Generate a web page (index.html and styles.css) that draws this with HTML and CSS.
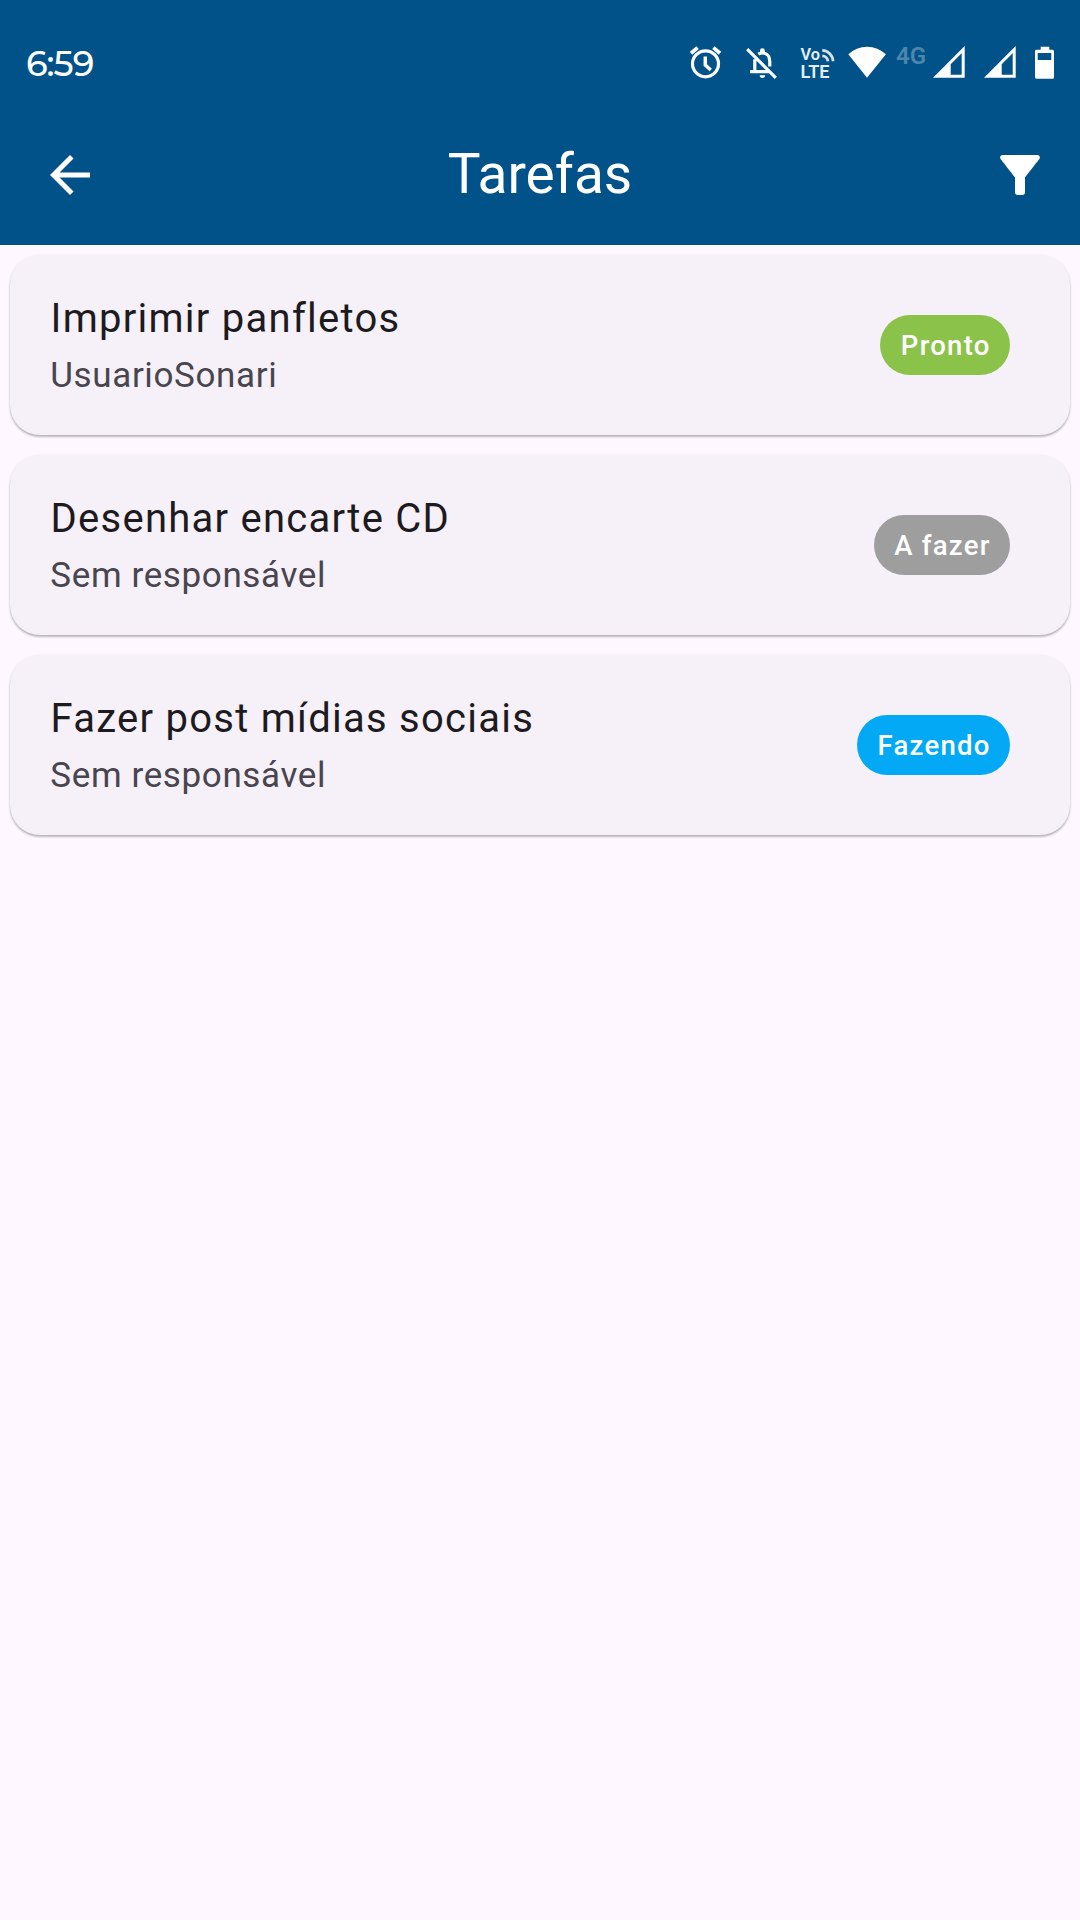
FILE: index.html
```html
<!DOCTYPE html>
<html lang="pt-BR">
<head>
<meta charset="utf-8">
<title>Tarefas</title>
<link rel="stylesheet" href="styles.css">
</head>
<body>
<header class="header">
  <div class="status">
    <span class="clock">6:59</span>
    <div class="status-icons">
      <svg class="alarm" viewBox="688 42 36 40" fill="none" stroke="#fff" stroke-width="3.200"><circle cx="705.5" cy="63.8" r="13"/><path d="M705.3 56.5V65l5.4 5" stroke-width="3.500"/><path d="M691 53.200l6.600-5.600M713.400 47.600l6.600 5.600" stroke-width="3.800"/></svg>
      <svg class="bell" viewBox="744 42 36 40" fill="none" stroke="#fff" stroke-width="3.200"><path d="M747.2 49.2l28.6 28.6M750 71.7h19.5M754.8 71V59.2M758.3 54.2q2-1.2 4.2-1.2c4.5 0 7.3 3.5 7.3 8.5v5"/><path d="M759.7 75.300h5.400a2.700 2.700 0 0 1-5.400 0zM760 54v-3.300a2.400 2.400 0 0 1 4.800 0V54z" fill="#fff" stroke="none"/></svg>
      <svg class="volte" viewBox="798 42 40 40"><g fill="#e4edf4"><text x="800.500" y="59.500" font-size="16" textLength="19.500" lengthAdjust="spacingAndGlyphs">Vo</text><text x="800.500" y="77.500" font-size="18" textLength="29" lengthAdjust="spacingAndGlyphs">LTE</text></g><path d="M822.300 50.300a11.500 11.500 0 0 1 10.800 11M822.300 55.800a6 6 0 0 1 5.600 5.500" fill="none" stroke="#d5e2ec" stroke-width="2.700"/></svg>
      <svg class="wifi" viewBox="848 42 40 40"><path d="M867 77.700L848.300 54.300a27 27 0 0 1 37.600 0z" fill="#fff"/></svg>
      <span class="network">4G</span>
      <svg class="signal" viewBox="933 42 32 40"><path fill="#fff" fill-rule="evenodd" d="M933 77.700h31.700V46zM950.700 74.700v-10.400l11-11v21.400z"/></svg>
      <svg class="signal second" viewBox="933 42 32 40"><path fill="#fff" fill-rule="evenodd" d="M933 77.700h31.700V46zM950.700 74.700v-10.400l11-11v21.400z"/></svg>
      <svg class="battery" viewBox="1035 42 19 40"><path fill="#fff" fill-rule="evenodd" d="M1037 49.700h3.700v-3h8.600v3h3.200q1.500 0 1.500 1.500v26q0 1.500-1.500 1.500h-16q-1.500 0-1.500-1.500v-26q0-1.500 1.500-1.500zM1037.700 53v7h13.600v-7z"/></svg>
    </div>
  </div>
  <div class="toolbar">
    <svg class="icon" viewBox="0 0 24 24"><path fill="#fff" d="M20 11H7.830l5.590-5.590L12 4l-8 8 8 8 1.410-1.410L7.830 13H20v-2z"/></svg>
    <h1 class="page-title">Tarefas</h1>
    <svg class="icon" viewBox="0 0 24 24"><path fill="#fff" d="M4.250 5.610C6.270 8.200 10 13 10 13v6c0 .55.45 1 1 1h2c.55 0 1-.45 1-1v-6s3.720-4.800 5.740-7.390C20.250 4.950 19.780 4 18.950 4H5.040c-.83 0-1.300.95-.79 1.610z"/></svg>
  </div>
</header>
<main class="list">
  <article class="card">
    <div class="info"><h2 class="name">Imprimir panfletos</h2><p class="owner">UsuarioSonari</p></div>
    <span class="badge done">Pronto</span>
  </article>
  <article class="card">
    <div class="info"><h2 class="name">Desenhar encarte CD</h2><p class="owner">Sem responsável</p></div>
    <span class="badge todo">A fazer</span>
  </article>
  <article class="card">
    <div class="info"><h2 class="name">Fazer post mídias sociais</h2><p class="owner">Sem responsável</p></div>
    <span class="badge doing">Fazendo</span>
  </article>
</main>
</body>
</html>
```
FILE: styles.css
```css
* { box-sizing: border-box; }
body {
  margin: 0;
  min-height: 1920px;
  background: #fef7ff;
  font-family: Roboto, "Liberation Sans", sans-serif;
}
svg { display: block; flex: none; }
h1, h2, p { margin: 0; font-weight: 400; white-space: nowrap; }

.header { height: 245px; background: #005288; color: #fff; }
.status {
  display: flex;
  justify-content: space-between;
  height: 105px;
  padding: 42px 26px 0 26px;
}
.clock {
  font: 500 35px/40px Montserrat, "Open Sans", sans-serif;
  letter-spacing: -1px;
  padding-top: 2px;
}
.status-icons { display: flex; height: 40px; }
.alarm { width: 36px; height: 40px; margin-right: 20px; }
.bell { width: 36px; height: 40px; margin-right: 18px; }
.volte { width: 40px; height: 40px; margin-right: 10px; font-weight: 600; }
.wifi { width: 40px; height: 40px; }
.network {
  width: 45px;
  padding-left: 8px;
  font-size: 24px;
  font-weight: 600;
  line-height: 28px;
  color: #4d86ac;
}
.signal { width: 32px; height: 40px; }
.second { margin: 0 19px; }
.battery { width: 19px; height: 40px; }

.toolbar {
  display: flex;
  align-items: center;
  justify-content: space-between;
  height: 140px;
  padding: 0 30px 0 40px;
}
.icon { width: 60px; height: 60px; }
.page-title { padding: 0 10px 2px 0; font-size: 55px; line-height: 70px; }

.list {
  display: flex;
  flex-direction: column;
  gap: 20px;
  padding: 10px;
}
.card {
  display: flex;
  align-items: center;
  justify-content: space-between;
  height: 180px;
  padding: 0 60px 0 40px;
  border-radius: 30px;
  background: #f6f1f9;
  box-shadow: 0 2px 2px rgba(0, 0, 0, .2), 0 1px 3px rgba(0, 0, 0, .12);
}
.name {
  padding-left: .6px;
  font-size: 40px;
  line-height: 60px;
  letter-spacing: 1.25px;
  color: #1d1b20;
}
.owner {
  padding: 2px 0 0 .3px;
  font-size: 35px;
  line-height: 50px;
  letter-spacing: .625px;
  color: #49454f;
}
.badge {
  height: 60px;
  padding: 1px 19.4px 0 20.6px;
  border-radius: 30px;
  font-size: 27.5px;
  font-weight: 500;
  line-height: 60px;
  letter-spacing: 1.25px;
  color: #fff;
}
.done { background: #8bc34a; }
.todo { background: #9e9e9e; }
.doing { background: #03a9f4; }
```
